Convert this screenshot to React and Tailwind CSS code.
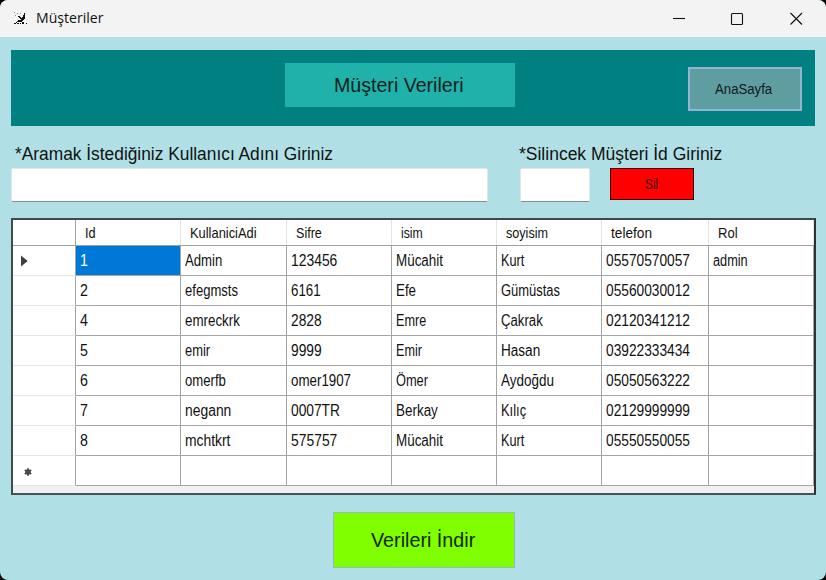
import { useLayoutEffect, useRef, useState } from 'react';

// Text condensed or widened horizontally so that it takes exactly `w` pixels.
function Fit({ w, className = '', children }) {
  const ref = useRef(null);
  const [scale, setScale] = useState(1);
  useLayoutEffect(() => {
    setScale(w / ref.current.offsetWidth);
  }, [w]);
  return (
    <span className="inline-block text-left" style={{ width: w }}>
      <span
        ref={ref}
        className={`inline-block origin-left whitespace-nowrap ${className}`}
        style={{ transform: `scaleX(${scale})` }}
      >
        {children}
      </span>
    </span>
  );
}

const headers = [
  ['Id', 11], ['KullaniciAdi', 67], ['Sifre', 26], ['isim', 22],
  ['soyisim', 42], ['telefon', 41], ['Rol', 20],
];

const rows = [
  [['1', 8], ['Admin', 37], ['123456', 46], ['Mücahit', 47], ['Kurt', 23], ['05570570057', 84], ['admin', 35]],
  [['2', 8], ['efegmsts', 53], ['6161', 30], ['Efe', 20], ['Gümüstas', 59], ['05560030012', 84], null],
  [['4', 8], ['emreckrk', 55], ['2828', 31], ['Emre', 30], ['Çakrak', 42], ['02120341212', 84], null],
  [['5', 8], ['emir', 25], ['9999', 31], ['Emir', 26], ['Hasan', 39], ['03922333434', 84], null],
  [['6', 8], ['omerfb', 41], ['omer1907', 60], ['Ömer', 32], ['Aydoğdu', 53], ['05050563222', 84], null],
  [['7', 8], ['negann', 46], ['0007TR', 49], ['Berkay', 42], ['Kılıç', 25], ['02129999999', 84], null],
  [['8', 8], ['mchtkrt', 45], ['575757', 46], ['Mücahit', 47], ['Kurt', 23], ['05550550055', 84], null],
  [null, null, null, null, null, null, null],
];

const cols = 'grid grid-cols-[63px_105px_106px_105px_105px_105px_107px_105px]';

function TitleBar() {
  return (
    <div className="flex h-[37px] shrink-0 items-center bg-[#f3f3f3]">
      <svg className="ml-[14px] h-[13px] w-[14px]" viewBox="0 0 14 13" shapeRendering="crispEdges">
        <path d="M0 0h1v1H0zM3 1h1v1H3zM1 3h1v1H1zM6 1h1v1H6z" fill="#888" />
        <path d="M10 1h1v6h-1v1H9v1H8v1H3V9h1V8h3V7H6V6H5V5H4V4h2v1h1v1h1V5h1V3h1zM2 10h1v1H2zM0 11h2v1H0zM3 11h2v1H3zM6 11h1v1H6zM8 10h2v2H8zM12 11h1v1h-1z" fill="#111" />
      </svg>
      <span className="-mt-[2px] ml-[8px] font-['Open_Sans','Noto_Sans',sans-serif] text-[14.5px] text-[#111]">
        <Fit w={67}>Müşteriler</Fit>
      </span>
      <svg className="-mt-px mr-[23px] ml-auto h-[13px] w-[131px]" viewBox="0 0 131 13" fill="none" stroke="#111" strokeWidth="1.1">
        <path d="M1 6.5h12" />
        <rect x="59.5" y="1.5" width="11" height="11" rx="1" />
        <path d="M118.5 1l11.5 11.5M130 1l-11.5 11.5" />
      </svg>
    </div>
  );
}

function Banner() {
  return (
    <div className="mt-[12.5px] ml-[11px] grid h-[76px] w-[804px] shrink-0 grid-cols-[274px_230px_1fr] items-start bg-[#008080]">
      <span />
      <div className="mt-[13.5px] flex h-[44px] items-center justify-center bg-[#20b2aa] text-[20.5px] text-[#0b1f1e]">
        <Fit w={130} className="-ml-px">Müşteri Verileri</Fit>
      </div>
      <button className="mt-[17.5px] mr-[13px] flex h-[44px] w-[114px] items-center justify-center justify-self-end border-2 border-[#93b3d0] bg-[#5f9ea0] text-[15.5px] text-[#0f1a1a]">
        <Fit w={57} className="-ml-[2px]">AnaSayfa</Fit>
      </button>
    </div>
  );
}

function SearchForm() {
  const input = 'mt-[4px] h-[34px] rounded-[2px] border border-[#dfe8e9] border-b-[#868b8c] bg-white';
  return (
    <div className="ml-[11px] flex h-[92.5px] shrink-0 items-start pt-[17.5px] text-[17.5px] text-[#111]">
      <div className="w-[509px]">
        <div className="ml-[4px] h-[21px] leading-[22px]">
          <Fit w={318}>*Aramak İstediğiniz Kullanıcı Adını Giriniz</Fit>
        </div>
        <div className={`${input} w-[477px]`} />
      </div>
      <div>
        <div className="-ml-px h-[21px] leading-[22px]">
          <Fit w={203}>*Silincek Müşteri İd Giriniz</Fit>
        </div>
        <div className="flex gap-[20px]">
          <div className={`${input} w-[70px]`} />
          <button className="mt-[4px] flex h-[32px] w-[84px] items-center justify-center border border-[#400] bg-[#f00] text-[15.5px] text-[#300]">
            <Fit w={13} className="-ml-px">Sil</Fit>
          </button>
        </div>
      </div>
    </div>
  );
}

function RowMarker({ index }) {
  if (index === 0) {
    return (
      <svg className="ml-[8px] h-[12px] w-[7px]" viewBox="0 0 7 12">
        <path d="M0 .5v11L6.7 6z" fill="#404040" />
      </svg>
    );
  }
  if (index === rows.length - 1) {
    return (
      <svg className="mt-[3px] ml-[10.5px] h-[8px] w-[8px]" viewBox="0 0 8 8" stroke="#4a4a4a" strokeWidth="1.8">
        <path d="M4 .3v7.4M.8 2l6.4 4M.8 6l6.4-4" />
        <circle cx="4" cy="4" r="1.8" fill="#4a4a4a" />
      </svg>
    );
  }
  return null;
}

function DataGrid() {
  return (
    <div className="ml-[11px] h-[277px] w-[805px] shrink-0 border-2 border-t-[#42494a] border-r-[#2c3233] border-b-[#4a5152] border-l-[#444b4c] bg-[#f0f0f0] text-[#111]">
      <div className={`${cols} h-[26px] border-b border-[#a0a0a0] bg-white text-[15px]`}>
        <div className="border-r border-[#a5a5a5]" />
        {headers.map(([label, w]) => (
          <div key={label} className="flex items-center border-r border-[#e3e3e3] pt-[2px] pl-[8.5px]">
            <Fit w={w}>{label}</Fit>
          </div>
        ))}
      </div>
      {rows.map((row, r) => (
        <div key={r} className={`${cols} h-[30px] bg-white text-[16px]`}>
          <div className="flex items-center border-r border-b border-r-[#a5a5a5] border-b-[#e6e6e6]">
            <RowMarker index={r} />
          </div>
          {row.map((cell, c) => (
            <div
              key={c}
              className={`flex items-center border-r border-b border-[#a5a5a5] pl-[4px] ${
                r === 0 && c === 0 ? 'bg-[#0078d7] text-white' : ''
              }`}
            >
              {cell && <Fit w={cell[1]}>{cell[0]}</Fit>}
            </div>
          ))}
        </div>
      ))}
    </div>
  );
}

export default function App() {
  return (
    <div className="h-[580px] w-[826px] bg-black">
      <div className="flex h-full w-full flex-col overflow-hidden rounded-[8px] bg-[#b0e0e6] font-['Liberation_Sans',Arial,sans-serif]">
        <TitleBar />
        <Banner />
        <SearchForm />
        <DataGrid />
        <button className="mt-[17px] ml-[332.5px] flex h-[56px] w-[182.5px] shrink-0 items-center justify-center border border-[#93b8c8] bg-[#7fff00] pt-px text-[20.5px] text-[#142800]">
          <Fit w={104} className="-ml-px">Verileri İndir</Fit>
        </button>
      </div>
    </div>
  );
}
